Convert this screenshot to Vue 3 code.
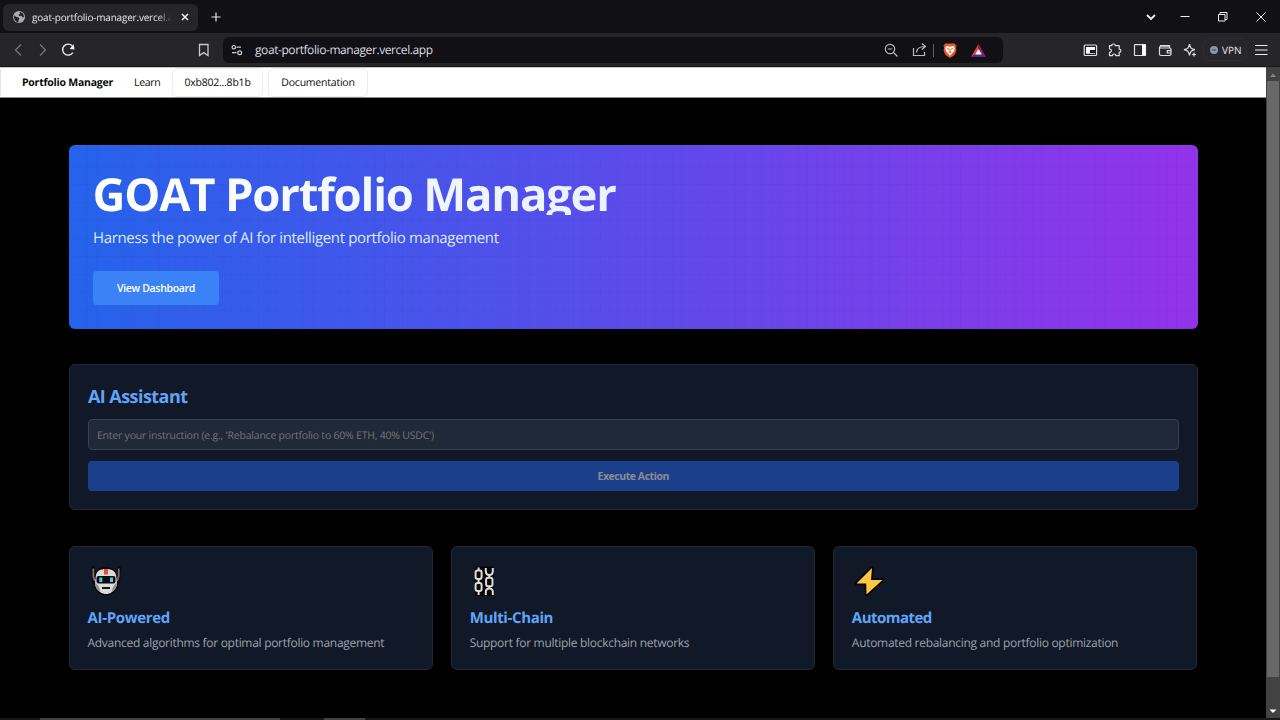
<script setup>
const features = [
  { icon: 'robot', title: 'AI-Powered', text: 'Advanced algorithms for optimal portfolio management', cls: 'f1' },
  { icon: 'chain', title: 'Multi-Chain', text: 'Support for multiple blockchain networks', cls: 'f2' },
  { icon: 'bolt', title: 'Automated', text: 'Automated rebalancing and portfolio optimization', cls: 'f3' },
]
</script>

<template>
  <div class="window">
    <div class="tabstrip">
      <div class="tab">
        <svg class="globe" viewBox="0 0 12 12"><circle cx="6" cy="6" r="6" fill="#a9abb0" /><path d="M1 4.2L3.2 6l2 .3 1.2 1.4-.8 1.3-.2 2.3C3 11 1 8.500 1 6zM5 1l2 .3.2 1.200L5.600 3.500l.4 1.300L8.500 5l1.200 1.300H11C11.200 3 9 .8 6 .9z" fill="#24242a" /></svg>
        <span class="tab-title">goat-portfolio-manager.vercel.a</span>
        <svg class="tab-close" viewBox="0 0 8 8"><path d="M1 1l6 6M7 1L1 7" stroke="#f2f2f4" stroke-width="1.5" /></svg>
      </div>
      <svg class="plus" viewBox="0 0 10 10"><path d="M5 .5v9M.5 5h9" stroke="#e4e4e8" stroke-width="1.2" /></svg>
      <svg class="win-controls" viewBox="0 0 130 20" fill="none" stroke="#eeeef0">
        <path d="M7 8l4 4 4-4" stroke-width="1.8" />
        <path d="M40.500 9.500h9" stroke-width="1" />
        <path d="M78.500 7.500h6.500v6.500h-6.500zM80 7.500v-2h7v7H85" stroke-width="1" />
        <path d="M116.500 5.500l9 9M125.500 5.500l-9 9" stroke-width="1" />
      </svg>
    </div>

    <div class="toolbar">
      <svg class="nav-icons" viewBox="0 0 80 20" fill="none">
        <path d="M13.500 4.500L8 10l5.500 5.500M32.500 4.500L38 10l-5.500 5.500" stroke="#77777c" stroke-width="1.200" transform="translate(1.500 0)" />
        <path d="M65.800 5.200a5.500 5.500 0 1 0 .7 6.800" stroke="#ededf0" stroke-width="1.400" transform="translate(.3 .6)" />
        <path d="M67 3.800l1 5.400-5-.6z" fill="#ededf0" transform="translate(.6 .3)" />
      </svg>
      <svg class="bookmark" viewBox="0 0 12 14" fill="none" stroke="#c9c9ce" stroke-width="1.300"><path d="M1.500 1.500h8.500v11L5.800 9.600 1.500 12.500z" /></svg>
      <div class="address">
        <svg class="tune" viewBox="0 0 12 12" fill="none" stroke="#cdcdd2" stroke-width="1.200"><circle cx="2.800" cy="3.200" r="1.700" /><path d="M5.500 3.200h4.500M1 8.700h4.500" /><circle cx="8.700" cy="8.700" r="1.900" /></svg>
        <span class="url">goat-portfolio-manager.vercel.app</span>
        <svg class="address-icons" viewBox="0 0 106 20" fill="none">
          <g stroke="#b9b9bf" stroke-width="1.200"><circle cx="10" cy="9" r="4.700" /><path d="M13.500 12.500l4 4M7.800 9h4.400" /><path d="M33.500 8v7.500h11V12M36.500 12.500c.3-4 3-6 8.500-6M41.800 3.500l3.700 3-3.700 3" /></g>
          <path d="M53.500 4v13" stroke="#606066" />
          <path d="M65.300 3.500h9.400l1.800 2.500-.6 1.500.4 2.500c-.5 4-2 5.500-6.300 8-4.300-2.500-5.800-4-6.300-8l.4-2.500-.6-1.500z" fill="#ea5722" />
          <path d="M66.300 6l3.700.8 3.700-.8 1 2.200-.8 3-3.900 4.500-3.900-4.500-.8-3z" fill="#fff" />
          <path d="M67 8.500l2.200.7M73 8.500l-2.200.7M70 9v3M68.500 12.200h3" stroke="#ea5722" stroke-width="1" />
          <path d="M98.500 4L91 17l7.500-4.500z" fill="#f0442d" /><path d="M98.500 4L106 17l-7.500-4.500z" fill="#9e1f63" /><path d="M91 17h15l-7.500-5z" fill="#552a8c" /><path d="M98.500 9l-3.300 5.500h6.600z" fill="#fff" />
        </svg>
      </div>
      <svg class="ext-icons" viewBox="0 0 120 20" fill="none" stroke="#dedee2" stroke-width="1.200">
        <rect x="1.200" y="5" width="12.400" height="10.500" rx="1" /><path d="M3 7h9v6.700H3z" fill="#fff" stroke="none" /><path d="M7 10h5v3H7z" fill="#17171c" stroke="none" />
        <path d="M26.500 5.700h2.300c-.5-2.300 3.900-2.300 3.400 0h4v3.500c2.200-.4 2.200 3.400 0 3v3.500h-3.400c.4-2.300-3.700-2.300-3.300 0h-3v-3.400c2.500.3 2.500-3.600 0-3.300z" stroke-linejoin="round" />
        <rect x="51.500" y="4.700" width="11" height="10.800" rx=".6" /><path d="M59 4.500h3.500v11H59z" fill="#fff" stroke="none" />
        <path d="M86.500 6.200H78a1.500 1.500 0 0 0-1.500 1.500v6.300c0 1 .5 1.500 1.500 1.500h8.500c1 0 1.500-.5 1.500-1.500V9.500c0-1-.5-1.500-1.500-1.500H77M88.500 10.700h-4.200V13h4.200M77 5.500h9.500V8" />
        <path d="M106 4c.8 4 1.700 5 5.500 5.700-3.800.8-4.700 1.800-5.500 5.800-.8-4-1.700-5-5.500-5.800C104.300 9 105.200 8 106 4zM110.500 12.500v4M108.500 14.500h4" transform="translate(.5 0)" />
      </svg>
      <div class="vpn"><svg viewBox="0 0 8 8"><circle cx="4" cy="4" r="4" fill="#8f95a6" /><path d="M2 4h4" stroke="#3c3f4a" /></svg><span>VPN</span></div>
      <svg class="menu" viewBox="0 0 14 12"><path d="M1 1.500h12.500M1 6h12.500M1 10.500h12.500" stroke="#ececf0" stroke-width="1.200" /></svg>
    </div>

    <div class="viewport">
      <div class="page">
        <nav class="nav">
          <div class="nav-group">
            <span class="brand">Portfolio Manager</span>
            <span class="learn">Learn</span>
          </div>
          <div class="nav-box wallet"><span>0xb802...8b1b</span></div>
          <div class="nav-box docs"><span>Documentation</span></div>
        </nav>

        <main>
          <section class="hero">
            <h1>GOAT Portfolio Manager</h1>
            <p>Harness the power of AI for intelligent portfolio management</p>
            <button><span>View Dashboard</span></button>
          </section>

          <section class="assistant">
            <h2>AI Assistant</h2>
            <div class="field"><span>Enter your instruction (e.g., 'Rebalance portfolio to 60% ETH, 40% USDC')</span></div>
            <button class="execute"><span>Execute Action</span></button>
          </section>

          <section class="features">
            <article v-for="f in features" :key="f.title" :class="f.cls">
              <svg v-if="f.icon === 'robot'" class="icon" viewBox="0 0 36 36">
                <path d="M5 6l1 13M31 6l-1 13" stroke="#0a0a0c" stroke-width="4" stroke-linecap="round" />
                <path d="M7 13c1-5 5-8 11-8s10 3 11 8l2 6c0 8-5 14.500-13 14.500S5 27 5 19z" fill="#08080a" />
                <path d="M5.300 6.500V14l1.500 5M30.700 6.500V14L29.200 19" stroke="#77716f" stroke-width="1.800" fill="none" />
                <path d="M8 13c1-4 4-6 10-6s9 2 10 6l1 8c0 4-2 7-5 9-2 1.500-4 2-6 2s-4-.5-6-2c-3-2-5-5-5-9z" fill="#dcdad8" />
                <path d="M7 21c2 1 3 2 4 4l1.500 5c-3.500-2-5.500-5-5.500-9zM29 21c-2 1-3 2-4 4l-1.500 5c3.500-2 5.500-5 5.500-9z" fill="#94908d" />
                <path d="M16 7h4v5.500h-4z" fill="#f04a2f" />
                <rect x="8.500" y="14" width="19" height="7.500" rx="2" fill="#0b0b0d" />
                <path d="M11.300 15.500h3V20h-3zM22 15.500h3V20h-3z" fill="#45c9e6" />
                <path d="M14 25h8v2h-8z" fill="#151517" />
              </svg>
              <svg v-else-if="f.icon === 'chain'" class="icon" viewBox="1.200 0 36 36">
                <path d="M6 4.500h19V34H6z" fill="#050506" />
                <g fill="none" stroke="#dedbd8" stroke-width="2">
                  <path d="M9.800 5.500v3M9.800 17v4M9.800 29v4M20.500 13v3M20.500 24v3" />
                  <rect x="6.800" y="8.500" width="6" height="8.500" rx="2" /><rect x="6.800" y="21" width="6" height="8" rx="2" />
                  <path d="M17 6v3c0 2.500 1.500 4 3.500 4S24 11.500 24 9V6M17 33v-3c0-2 1.500-3.500 3.500-3.500S24 28 24 30v3" />
                  <rect x="17.300" y="15.800" width="6.400" height="8.400" rx="2" />
                </g>
              </svg>
              <svg v-else class="icon" viewBox="0.500 0 36 36">
                <path d="M20.500 6L5 21.500h9.700L15 32.500 31 18H19.500z" fill="#ffc83d" stroke="#050506" stroke-width="3.600" stroke-linejoin="round" paint-order="stroke" />
              </svg>
              <h3>{{ f.title }}</h3>
              <p>{{ f.text }}</p>
            </article>
          </section>
        </main>
      </div>
      <div class="scrollbar">
        <svg viewBox="0 0 14 14"><path d="M4 10h6L7 6.500z" fill="#858585" /></svg>
        <div class="thumb"></div>
        <svg viewBox="0 0 14 14"><path d="M3.500 5.500h7L7 9z" fill="#fff" /></svg>
      </div>
    </div>
    <div class="taskbar"><i class="t1"></i><i class="t2"></i></div>
  </div>
</template>

<style>
html, body { background: #000; overflow: hidden; }
</style>

<style scoped>
* { box-sizing: border-box; }
.window { width: 1280px; height: 720px; display: flex; flex-direction: column; overflow: hidden; background: #000; font-family: "Open Sans", "Noto Sans", sans-serif; white-space: nowrap; text-rendering: geometricPrecision; }
svg { display: block; flex: none; overflow: visible; }
h1, h2, h3, p { margin: 0; }
button { border: 0; font-family: inherit; padding: 0; }

.tabstrip { height: 33px; flex: none; background: #101015; display: flex; align-items: center; }
.tab { width: 195px; height: 27px; margin: 1px 0 0 3px; border-radius: 6px; background: #25252a; display: flex; align-items: center; padding-left: 10px; }
.globe { width: 12px; height: 12px; }
.tab-title { margin-left: 7px; width: 140px; color: #e6e6ea; font-size: 10px; letter-spacing: -.2px; -webkit-mask-image: linear-gradient(90deg, #000 89%, transparent); mask-image: linear-gradient(90deg, #000 89%, transparent); }
.tab-close { width: 8px; height: 8px; margin-left: 9px; }
.plus { width: 10px; height: 10px; margin-left: 13px; }
.win-controls { width: 130px; height: 20px; margin-left: auto; margin-right: 10px; }

.toolbar { height: 34px; flex: none; background: #25252a; display: flex; align-items: center; border-bottom: 1px solid #18181c; }
.nav-icons { width: 80px; height: 20px; margin-left: 6px; }
.bookmark { width: 12px; height: 14px; margin-left: 112px; }
.address { width: 780px; height: 26px; margin-left: 13px; border-radius: 6px; background: #101015; display: flex; align-items: center; padding-left: 8px; }
.tune { width: 12px; height: 12px; }
.url { margin-left: 12px; font-size: 12px; letter-spacing: -.42px; color: #dcdce2; }
.address-icons { width: 106px; height: 20px; margin-left: auto; margin-right: 17px; }
.ext-icons { width: 120px; height: 20px; margin-left: 80px; }
.vpn { width: 44px; height: 23px; border: 1px solid #2c2c31; border-radius: 8px; display: flex; align-items: center; padding-left: 6px; gap: 4px; color: #e8e8ec; font-size: 10px; }
.vpn svg { width: 8px; height: 8px; }
.menu { width: 14px; height: 12px; margin-left: 7px; }

.viewport { height: 651px; flex: none; display: flex; }
.page { width: 1266px; }
.nav { height: 31px; background: #fff; border-top: 1px solid #c6c6c8; border-bottom: 1px solid #8a8a8a; display: flex; color: #0a0a0a; font-size: 10.500px; align-items: stretch; font-weight: 500; }
.nav-group { width: 172px; display: flex; align-items: center; border-left: 1px solid #e5e5e5; border-radius: 4px; padding-left: 21px; }
.nav span { line-height: 16px; padding-top: 1px; }
.brand { font-weight: 700; width: 112px; letter-spacing: -.24px; }
.learn { letter-spacing: -.3px; }
.nav-box { border: 1px solid #ededed; border-radius: 5px; display: flex; align-items: center; justify-content: center; letter-spacing: -.22px; }
.wallet { width: 91px; margin-right: 5px; }
.docs { width: 100px; }

main { padding: 47px 68.500px 0 69px; display: flex; flex-direction: column; gap: 36px; }
.hero { height: 184px; border-radius: 6px; padding: 24px; background: repeating-linear-gradient(90deg, rgba(20, 30, 100, .035) 0 1px, transparent 1px 9px), repeating-linear-gradient(0deg, rgba(20, 30, 100, .045) 0 1px, transparent 1px 18px), linear-gradient(90deg, #2563eb, #9333ea); }
.hero h1 { width: 1080px; height: 46px; line-height: 50px; font-size: 45.500px; font-weight: 700; letter-spacing: -1.240px; color: transparent; background: linear-gradient(90deg, #fff, #d0e3fe); -webkit-background-clip: text; background-clip: text; text-indent: -.5px; }
.hero p { margin-top: 9px; line-height: 28px; font-size: 15px; letter-spacing: -.35px; color: #dbeafe; }
.hero button { margin-top: 19px; width: 126px; height: 34px; border-radius: 4px; background: #3b82f6; color: #fff; font-size: 10.500px; font-weight: 600; letter-spacing: -.33px; }

.assistant { height: 146px; border: 1px solid #1f2937; border-radius: 6px; background: #111827; padding: 18px 18px; margin-top: -1px; }
.assistant h2 { height: 28px; line-height: 28px; font-size: 18px; font-weight: 700; letter-spacing: -.56px; color: #60a5fa; }
.field { margin-top: 8px; height: 31px; border: 1px solid #374151; border-radius: 4px; background: #1f2937; color: #757575; font-size: 10.500px; letter-spacing: -.22px; display: flex; align-items: center; padding: 2px 0 0 8px; }
.execute { display: block; width: 100%; margin-top: 11px; height: 30px; border-radius: 4px; background: #1b3f8b; color: #888c96; font-size: 10.500px; font-weight: 700; letter-spacing: -.45px; }

.features { display: grid; grid-template-columns: repeat(3, 1fr); gap: 18px; }
article { height: 124px; border: 1px solid #1f2937; border-radius: 6px; background: #111827; padding: 15px 17.500px; }
.icon { width: 36px; height: 36px; }
article h3 { margin-top: 8px; height: 24px; line-height: 24px; font-size: 15px; font-weight: 700; letter-spacing: -.32px; color: #60a5fa; }
.f2 h3 { letter-spacing: -.36px; }
.f3 h3 { letter-spacing: -.53px; }
article p { margin-top: 3px; line-height: 20px; font-size: 12px; letter-spacing: -.29px; color: #9ca3af; }

.scrollbar { width: 14px; background: #424242; display: flex; flex-direction: column; }
.scrollbar svg { width: 14px; height: 14px; }
.thumb { width: 12px; height: 597px; margin: 0 1px; background: #686868; }
.scrollbar svg:last-child { margin-top: 27px; }
.taskbar { height: 2px; flex: none; background: #1a1616; display: flex; }
.taskbar i { height: 2px; background: #454242; }
.t1 { width: 240px; margin-left: 40px; }
.t2 { width: 41px; margin-left: 44px; }
</style>
